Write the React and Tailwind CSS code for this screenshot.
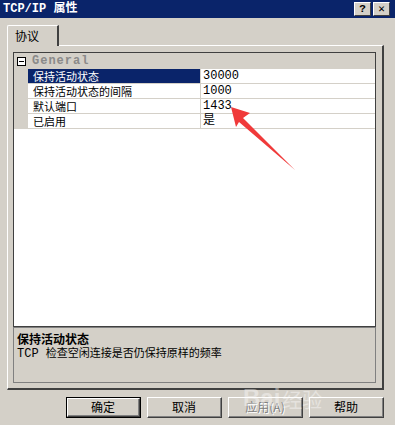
import React from 'react';

const cjk = { fontFamily: '"Noto Sans CJK SC", "DejaVu Sans", sans-serif' };
const mono = { fontFamily: '"Liberation Mono", "Noto Sans CJK SC", monospace' };

const rows = [
  { name: '保持活动状态', value: '30000', selected: true },
  { name: '保持活动状态的间隔', value: '1000' },
  { name: '默认端口', value: '1433' },
  { name: '已启用', value: '是' },
];

// classic 3D push button
const Btn = ({ children, primary, disabled }) => (
  <div className={`w-[75px] h-[21px] ${primary ? 'border border-black' : ''}`}>
    <div className="h-full border-t border-l border-white border-r border-b border-r-[#404040] border-b-[#404040] bg-[#d4d0c8]">
      <div className="h-full flex items-center justify-center border-r border-b border-r-[#808080] border-b-[#808080] text-[12px] leading-[14px]" style={cjk}>
        {disabled ? (
          <span className="text-[#808080] [text-shadow:1px_1px_0_#fff]">{children}</span>
        ) : (
          <span className="text-black">{children}</span>
        )}
      </div>
    </div>
  </div>
);

const TitleBtn = ({ children }) => (
  <div className="w-[17px] h-[14px] bg-[#d4d0c8] border-t border-l border-white border-r border-b border-r-[#404040] border-b-[#404040] flex items-center justify-center text-[11px] font-bold text-black leading-none" style={mono}>
    {children}
  </div>
);

export default function App() {
  return (
    <div className="relative w-[395px] h-[425px] bg-[#d4d0c8] overflow-hidden flex flex-col">
      {/* title bar */}
      <div className="h-[18px] bg-[#0a246a] flex items-center justify-between pl-[3px] pr-[5px]">
        <span className="text-white text-[12px] font-bold leading-[16px]" style={mono}>TCP/IP 属性</span>
        <div className="flex gap-[2px]">
          <TitleBtn>?</TitleBtn>
          <TitleBtn>✕</TitleBtn>
        </div>
      </div>

      <div className="pl-[7px] pr-[11px] pt-[7px]">
        {/* tab */}
        <div className="h-[20px] flex">
          <div className="w-[52px] h-[21px] relative z-10 bg-[#d4d0c8] border-t border-l border-white border-r-2 border-r-[#404040] rounded-tl-[2px] pl-[7px] pt-[2px] text-[12px] leading-[15px] text-black" style={cjk}>
            协议
          </div>
        </div>

        {/* tab panel */}
        <div className="h-[345px] border-t border-l border-white border-r-2 border-b-2 border-r-[#404040] border-b-[#404040] pl-[5px] pr-[6px] pt-[6px] flex flex-col">
          {/* property grid */}
          <div className="h-[275px] bg-white border border-[#404040] flex flex-col">
            <div className="h-[16px] bg-[#d4d0c8] flex items-center">
              <div className="w-[14px] flex justify-center">
                <div className="w-[9px] h-[9px] border border-black bg-white flex items-center justify-center">
                  <div className="w-[5px] h-px bg-black" />
                </div>
              </div>
              <span className="ml-[4px] text-[12px] leading-[14px] font-bold text-[#8a8a8a] tracking-[1px]" style={mono}>General</span>
            </div>
            {rows.map((r) => (
              <div key={r.name} className="h-[15px] flex border-b border-[#d4d0c8]">
                <div className="w-[14px] bg-[#d4d0c8]" />
                <div className={`w-[173px] h-[14px] flex items-center border-r border-[#d4d0c8] pl-[5px] text-[11px] leading-[13px] ${r.selected ? 'bg-[#0a246a] text-white' : 'text-black'}`} style={cjk}>
                  {r.name}
                </div>
                <div className="flex-1 h-[14px] flex items-center pl-[2px] text-[12px] leading-[13px] text-black" style={mono}>{r.value}</div>
              </div>
            ))}
          </div>

          {/* description */}
          <div className="h-[56px] border border-[#808080] px-[3px] pt-[3px]">
            <div className="text-[12px] font-bold text-black leading-[15px]" style={cjk}>保持活动状态</div>
            <div className="mt-[1px] text-[11px] text-black leading-[15px] whitespace-nowrap" style={mono}>
              <span className="text-[12px]">TCP </span>检查空闲连接是否仍保持原样的频率
            </div>
          </div>
        </div>

        {/* buttons */}
        <div className="mt-[7px] pl-[59px] flex gap-[6px]">
          <Btn primary>确定</Btn>
          <Btn>取消</Btn>
          <Btn disabled>应用(A)</Btn>
          <Btn>帮助</Btn>
        </div>
      </div>

      {/* red annotation arrow */}
      <svg className="absolute left-0 top-0 pointer-events-none" width="395" height="425">
        <polygon points="231,107 250,113 243,118 295,170 239,122 236,127" fill="#f03a3a" />
      </svg>

      {/* watermark */}
      <div className="absolute left-[243px] top-[386px] flex items-end gap-[2px] pointer-events-none opacity-40">
        <span className="text-[24px] font-bold text-white leading-none" style={{ fontFamily: '"Liberation Sans", Arial, sans-serif' }}>Bai</span>
        <span className="text-[20px] text-white leading-none" style={cjk}>经验</span>
      </div>
    </div>
  );
}
